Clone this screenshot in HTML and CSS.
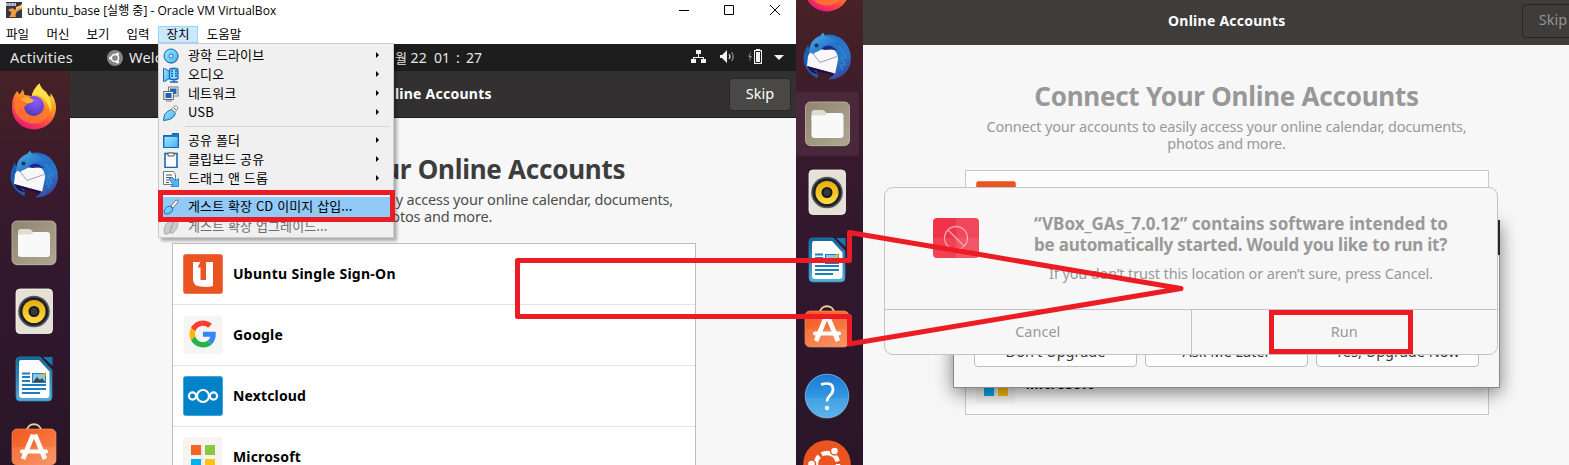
FILE: index.html
```html
<!DOCTYPE html>
<html lang="ko">
<head>
<meta charset="utf-8">
<title>ubuntu_base - Oracle VM VirtualBox</title>
<link rel="stylesheet" href="styles.css">
</head>
<body>
<svg class="defs" width="0" height="0">
  <defs>
    <linearGradient id="ffBody" x1="0.8" y1="0" x2="0.3" y2="1"><stop offset="0" stop-color="#fff04a"/><stop offset=".38" stop-color="#ff9d1f"/><stop offset=".7" stop-color="#ff4a45"/><stop offset="1" stop-color="#e8137c"/></linearGradient>
    <radialGradient id="ffGlobe" cx=".6" cy=".25" r=".8"><stop offset="0" stop-color="#9059ff"/><stop offset="1" stop-color="#4c3bb5"/></radialGradient>
    <linearGradient id="tbBody" x1=".3" y1="0" x2=".8" y2="1"><stop offset="0" stop-color="#1f6fd0"/><stop offset=".6" stop-color="#2a77c4"/><stop offset="1" stop-color="#3b3f9f"/></linearGradient>
    <linearGradient id="tbHead" x1="0" y1="0" x2="1" y2="1"><stop offset="0" stop-color="#4fb2e8"/><stop offset="1" stop-color="#1459b8"/></linearGradient>
    <linearGradient id="filesBg" x1="0" y1="0" x2="1" y2="1"><stop offset="0" stop-color="#8f856f"/><stop offset="1" stop-color="#b0a793"/></linearGradient>
    <linearGradient id="spk" x1="0" y1="0" x2="0" y2="1"><stop offset="0" stop-color="#e5ad0c"/><stop offset="1" stop-color="#ffdc43"/></linearGradient>
    <linearGradient id="loBg" x1="0" y1="0" x2="0" y2="1"><stop offset="0" stop-color="#0c669c"/><stop offset="1" stop-color="#55aedb"/></linearGradient>
    <linearGradient id="swBg" x1="0" y1="0" x2="1" y2="1"><stop offset="0" stop-color="#f4581d"/><stop offset="1" stop-color="#f58b56"/></linearGradient>
    <linearGradient id="helpBg" x1="0" y1="0" x2="0" y2="1"><stop offset="0" stop-color="#1a7bd4"/><stop offset="1" stop-color="#4bb0ea"/></linearGradient>
    <linearGradient id="aqua" x1="0" y1="0" x2="1" y2="1"><stop offset="0" stop-color="#9be6ff"/><stop offset="1" stop-color="#4ab4f0"/></linearGradient>
  </defs>
  <symbol id="firefox" viewBox="0 0 48 48">
    <path d="M7 9 L9.500 12.500 L13 7.500 L14.500 13 Q19 13 21.500 14.500 Q23 7 29.500 1.500 Q31 7 36 10 Q38 14 40.500 15 L40.500 11 Q46 18 46 26 A22 21.500 0 0 1 2 26 Q1.500 16 7 9Z" fill="url(#ffBody)"/>
    <circle cx="24" cy="24" r="10" fill="url(#ffGlobe)"/>
    <path d="M6 16 Q12 14 17 15.500 Q21 16 24 18 Q23 21 18 21.500 Q16 24 14 25 Q14 31 20 33.500 Q25 35.500 30 32 Q35 28 34 22 Q41 30 36 37 Q29 43 19 41 Q6 37 4 25Z" fill="#ff7a2b" opacity=".8"/>
    <path d="M10 17 Q15 14 20 16 Q22 17 24 18 Q22 21 17 21.500 Q14 19 10 17Z" fill="#ffb02e"/>
    <path d="M29.500 1.500 Q31 7 36 10 Q43 20 41 30 Q38 20 32 15 Q26 12 22 14 Q23 7 29.500 1.500Z" fill="#ffe14a"/>
  </symbol>
  <symbol id="thunderbird" viewBox="0 0 48 48">
    <path d="M5 13 Q-1 22 1 31 Q4 41 14 46 L15 44 L12 33 Z" fill="#1b5fb4"/>
    <path d="M14 5 Q28 -1 39 7 Q48 15 48 27 Q47 42 32 47 L25 47.500 L31 43 L28 40 L12 12Z" fill="url(#tbBody)"/>
    <path d="M13 20 Q22 14 31 18 Q35 21 35 28 L32 42 L4 34 L5 24 L8 19 Z" fill="#f8f8fa"/>
    <path d="M8 19 L17 30.500 L34 24.500" fill="none" stroke="#a0a0a8" stroke-width="1"/>
    <path d="M4 34 L32 41.500 L29 43 L10 38 L15 42 Q8 42 4 34Z" fill="#260b45"/>
    <path d="M18 17 Q25 10 34 18 Q29 17 22 18Z" fill="#22268c"/>
    <path d="M6 20 Q7 7 17 4 L20 .5 L22 4 Q32 5 36 13 Q25 9 18 17 L10 22Z" fill="url(#tbHead)"/>
    <circle cx="13.500" cy="13.500" r="2" fill="#17335e"/>
    <path d="M36 14 L43 26 L38 25.500 L42 33 L37 33 L40 38" fill="none" stroke="#2a8bd6" stroke-width="1.200"/>
  </symbol>
  <symbol id="files" viewBox="0 0 48 48">
    <rect x="2" y="2.500" width="44" height="44" rx="5" fill="#5d5447"/>
    <rect x="2" y="2" width="44" height="43.500" rx="5" fill="url(#filesBg)" stroke="#c3bba9" stroke-width=".8"/>
    <path d="M8 13 q0-3 3-3 h8 q2 0 4 3 h14 v8 H8Z" fill="#e0dcd2"/>
    <path d="M8 15.500 h13 l3-2.500 h13 q3 0 3 3 V35 q0 3-3 3 H11 q-3 0-3-3Z" fill="#f9f9f9"/>
  </symbol>
  <symbol id="rhythm" viewBox="0 0 48 48">
    <rect x="6" y="2" width="36.500" height="44.500" rx="4" fill="#e5e1d6" stroke="#fbf9f0" stroke-width=".8"/>
    <circle cx="24" cy="24.500" r="15.800" fill="#555961"/><circle cx="24" cy="24.500" r="14.300" fill="#202128"/>
    <circle cx="24" cy="24.500" r="11.500" fill="url(#spk)"/><circle cx="24" cy="24.500" r="5.500" fill="#18191d"/><circle cx="24" cy="24.500" r="3.500" fill="#37393c"/>
  </symbol>
  <symbol id="writer" viewBox="0 0 48 48">
    <path d="M10 2 H30 L42 15 V42 q0 4-4 4 H10 q-4 0-4-4 V6 q0-4 4-4Z" fill="url(#loBg)" stroke="#2f89bc" stroke-width=".7"/>
    <path d="M33 2 H42.500 V11Z" fill="#1479af"/>
    <path d="M11 5 H29 L39.500 16.500 V40 q0 3-3 3 H12 q-3 0-3-3 V8 q0-3 2-3Z" fill="#fdfdfd"/>
    <path d="M12 18.500 h8 M12 22 h8 M12 26 h8 M12 30 h24 M12 34 h24 M12 38 h18" stroke="#1c7fbe" stroke-width="1.800"/>
    <rect x="22.500" y="18.500" width="13" height="9" fill="#8dc6e5" stroke="#1c7fbe"/><path d="M23 27 l4-5 3 3 2-2 3 4Z" fill="#404448"/><circle cx="34" cy="20" r="1.700" fill="#f5c400"/>
  </symbol>
  <symbol id="software" viewBox="0 0 48 48">
    <path d="M17 9 C17 0 31 0 31 9" fill="none" stroke="#f4cf9b" stroke-width="1.800"/>
    <rect x="2" y="7" width="44" height="36" rx="5" fill="url(#swBg)" stroke="#ff9b6b" stroke-width=".6"/>
    <rect x="2.500" y="25" width="43" height="17.500" rx="3" fill="#fff" opacity=".1"/>
    <path d="M23 13 L13 37 M25 13 L35 37" stroke="#fff" stroke-width="4.600"/><path d="M20.700 13h6.600" stroke="#fff" stroke-width="1"/>
    <path d="M12 29.500 H36" stroke="#fff" stroke-width="4" stroke-linecap="round"/>
  </symbol>
  <symbol id="help" viewBox="0 0 48 48">
    <circle cx="24" cy="24" r="21.800" fill="url(#helpBg)" stroke="#7cbfee" stroke-width=".8"/>
    <path d="M2.500 26 H45.500 A21.500 21.500 0 0 1 2.500 26Z" fill="#fff" opacity=".08"/>
    <path d="M18 12.500 Q30 9 30 17.500 Q30 21 26.500 24 Q24 26.500 24 29.500" fill="none" stroke="#fff" stroke-width="2.700"/><circle cx="24" cy="36" r="2.200" fill="#fff"/>
  </symbol>
  <symbol id="ubuntu" viewBox="0 0 48 48">
    <circle cx="24" cy="24" r="23.800" fill="#e95420"/><circle cx="24" cy="24" r="11" fill="none" stroke="#fff" stroke-width="4.500" stroke-dasharray="20 3"/>
    <g fill="#fff" stroke="#e95420" stroke-width="1.500"><circle cx="8.500" cy="24" r="4"/><circle cx="31.500" cy="11" r="4"/><circle cx="31.500" cy="37" r="4"/></g>
  </symbol>
  <symbol id="msft" viewBox="0 0 40 40">
    <rect width="39" height="39" rx="2" fill="#f5f4f2"/><path d="M8 8h10v10H8z" fill="#f26522"/><path d="M22 8h10v10H22z" fill="#8dc63f"/><path d="M8 22h10v10H8z" fill="#00aeef"/><path d="M22 22h10v10H22z" fill="#ffc20e"/><path d="M19 8v24" stroke="#ddd" />
  </symbol>
</svg>

<main class="stage">
  <section class="left">
    <header class="titlebar">
      <svg class="vbox" viewBox="0 0 16 16"><rect width="16" height="16" fill="#343848"/><path d="M0 1h10v3H0z" fill="#c8cbd4"/><path d="M2 1v4M5 1v3M8 1v3" stroke="#555" stroke-width=".7"/><path d="M2 8q4-3 6-1 2 2 8-3v3q-5 2-6 4t0 4H3q3-3 2-5z" fill="#f79a3a"/><path d="M10 5q3 0 6-3v4q-4 0-6 2z" fill="#ffc77d"/></svg>
      <span class="wintitle">ubuntu_base [실행 중] - Oracle VM VirtualBox</span>
      <svg class="winbtns" viewBox="0 0 120 25"><path d="M9 10.500h10M54.500 5.500h9v9h-9zM100 5l10 10M110 5l-10 10" fill="none" stroke="#000" stroke-width="1"/></svg>
    </header>
    <nav class="menubar"><span>파일</span><span>머신</span><span>보기</span><span>입력</span><span class="open">장치</span><span>도움말</span></nav>
    <div class="topbar">
      <span class="act">Activities</span>
      <svg class="cof" viewBox="0 0 16 16"><circle cx="8" cy="8" r="8" fill="#858585"/><circle cx="8" cy="8" r="3.600" fill="none" stroke="#fff" stroke-width="1.500"/><g fill="#fff"><circle cx="3.500" cy="8" r="1.500"/><circle cx="10.500" cy="4" r="1.500"/><circle cx="10.500" cy="12" r="1.500"/></g></svg>
      <span class="welc">Welc</span>
      <span class="clock">1<b>월</b> 22&nbsp; 01 <i>:</i> 27</span>
      <svg class="tray" viewBox="0 0 100 20"><g fill="#f2f2f2"><rect x="6" y="3" width="5" height="4"/><rect x="1" y="12" width="5" height="4"/><rect x="11" y="12" width="5" height="4"/><path d="M8 7h1v3h5v3h-1v-2H4v2H3v-3h5z"/><path d="M30 8h2l5-5v13l-5-5h-2z"/><path d="M84 8h10l-5 5z"/><path d="M66 2h4v1h2v14h-8V3h2z"/></g><path d="M39 7q2 2.500 0 5" fill="none" stroke="#ddd" stroke-width="1.200"/><path d="M41.500 5q3.500 4.500 0 9" fill="none" stroke="#888" stroke-width="1.200"/><path d="M65.500 4.500h5v11h-5z" fill="none" stroke="#1d1d1d"/><path d="M61 4l-3 6h2l-1 5 3-6h-2z" fill="#888"/></svg>
    </div>
    <div class="desktop">
      <aside class="dock"><svg><use href="#firefox"/></svg><svg><use href="#thunderbird"/></svg><svg><use href="#files"/></svg><svg><use href="#rhythm"/></svg><svg><use href="#writer"/></svg><svg class="low"><use href="#software"/></svg></aside>
      <div class="app">
        <header class="apphead"><span class="headtitle">Online Accounts</span><span class="skip">Skip</span></header>
        <div class="body">
          <h1>Connect Your Online Accounts</h1>
          <p>Connect your accounts to easily access your online calendar, documents,<br>photos and more.</p>
          <ul class="accounts">
            <li><svg viewBox="0 0 40 40"><rect x=".5" y=".5" width="39" height="39" rx="2" fill="#e95420" stroke="#ed7a52"/><path d="M10 8h6l1.500-.5-1.500 4.500h1.500v14h5.500V8h7v24q-6 1.500-12 .5-8-.5-8-7z" fill="#fff"/><path d="M18.500 6.500v7h-4z" fill="#e95420"/></svg><span class="sso">Ubuntu Single Sign-On</span></li>
            <li><svg viewBox="0 0 40 40"><rect x=".5" y=".5" width="38.500" height="38.500" rx="2" fill="#f6f5f4"/><g transform="translate(6.500 5.500) scale(.56)"><path fill="#FF3E30" d="M24 9.500c3.540 0 6.710 1.220 9.210 3.600l6.850-6.850C35.900 2.380 30.470 0 24 0 14.620 0 6.510 5.380 2.560 13.220l7.980 6.190C12.430 13.720 17.740 9.500 24 9.500z"/><path fill="#3686F7" d="M46.980 24.550c0-1.570-.15-3.090-.38-4.550H24v9.020h12.940c-.58 2.960-2.260 5.480-4.780 7.180l7.730 6c4.510-4.180 7.090-10.360 7.090-17.650z"/><path fill="#FFBA00" d="M10.530 28.590c-.48-1.450-.76-2.990-.76-4.590s.27-3.140.76-4.590l-7.980-6.190C.92 16.460 0 20.120 0 24c0 3.880.92 7.540 2.560 10.780l7.970-6.190z"/><path fill="#27B34B" d="M24 48c6.480 0 11.930-2.130 15.890-5.810l-7.730-6c-2.150 1.450-4.920 2.300-8.160 2.300-6.260 0-11.570-4.220-13.470-9.910l-7.980 6.190C6.510 42.620 14.620 48 24 48z"/></g></svg><span>Google</span></li>
            <li><svg viewBox="0 0 40 40"><rect x=".5" y=".5" width="39" height="39" rx="2" fill="#0082c9" stroke="#45a5da"/><g fill="none" stroke="#fff" stroke-width="2.200"><circle cx="20" cy="20" r="6"/><circle cx="9.500" cy="20" r="3.600"/><circle cx="30.500" cy="20" r="3.600"/></g></svg><span>Nextcloud</span></li>
            <li><svg><use href="#msft"/></svg><span>Microsoft</span></li>
          </ul>
        </div>
      </div>
    </div>
    <div class="menu">
      <div class="mi"><svg viewBox="0 0 16 16"><circle cx="8.500" cy="8.500" r="7" fill="#999"/><circle cx="8" cy="8" r="7" fill="url(#aqua)" stroke="#1565b8"/><circle cx="8" cy="8" r="2" fill="#d8f4ff" stroke="#2878b8"/></svg><span>광학 드라이브</span><i></i></div>
      <div class="mi"><svg viewBox="0 0 16 16"><path d="M.5 1.500h1l5 3v7l-5 3h-1z" fill="url(#aqua)" stroke="#1565b8"/><rect x="6.500" y="1.500" width="8.500" height="11" rx="2" fill="#8bdcff" stroke="#1565b8" stroke-width="1.300"/><path d="M8 4h2M12 4h2M8 6.500h2M12 6.500h2M8 9h2M12 9h2M7 15h8M11 13v2" stroke="#1565b8" stroke-width="1.300"/></svg><span>오디오</span><i></i></div>
      <div class="mi"><svg viewBox="0 0 16 16"><rect x="5.500" y="1" width="9.500" height="9" fill="#f5f5f5" stroke="#777"/><rect x="7" y="2.500" width="6.500" height="5.500" fill="#1762bd"/><rect x=".8" y="5.500" width="9.500" height="8" fill="#f5f5f5" stroke="#666"/><rect x="2.500" y="7" width="6" height="5" fill="#1762bd"/><path d="M3 15h6" stroke="#777"/></svg><span>네트워크</span><i></i></div>
      <div class="mi"><svg viewBox="0 0 16 16"><path d="M.5 15.500l1-6q3-4 7-5l4 4q-1 4-6 6z" fill="url(#aqua)" stroke="#1565b8"/><path d="M8.500 4l3-3q2-.5 3.500 1.500 .5 1-3 5z" fill="#f4f4f4" stroke="#888"/><path d="M11 3l2 2" stroke="#555"/></svg><span>USB</span><i></i></div>
      <hr>
      <div class="mi"><svg viewBox="0 0 16 16"><path d="M.5 2.500h8l1-2h6v14H.5z" fill="#2374cf" stroke="#1565b8"/><rect x="1.500" y="4" width="13" height="10" fill="url(#aqua)"/></svg><span>공유 폴더</span><i></i></div>
      <div class="mi"><svg viewBox="0 0 16 16"><rect x="2" y="1.500" width="12" height="14" fill="#f8fcff" stroke="#1e66b5" stroke-width="1.600"/><path d="M5 1h6v3H5z" fill="#fff" stroke="#555"/></svg><span>클립보드 공유</span><i></i></div>
      <div class="mi"><svg viewBox="0 0 16 16"><path d="M.5 .5h10l2 3v10H.5z" fill="#fafafa" stroke="#777"/><path d="M3 4h6M3 6.500h5M3 9h3M3 11.500h3" stroke="#555"/><path d="M6 8l3-2 3.500 3.500 3-2v8H8l2-2z" fill="#54b7ef" stroke="#1565b8" stroke-width=".7"/></svg><span>드래그 앤 드롭</span><i></i></div>
      <div class="mi hot"><svg viewBox="0 0 16 16"><path d="M8 7l5-6q3 0 2 2l-5 6z" fill="#f8f8f8" stroke="#777"/><path d="M1 12q2-5 6-5l3 3q-1 5-7 5-2 0-2-3z" fill="url(#aqua)" stroke="#2470c0"/></svg><span>게스트 확장 CD 이미지 삽입...</span></div>
      <div class="mi off"><svg viewBox="0 0 16 16"><path d="M1 11q1-7 6-9h3l-1 7-4 6H2zM8 8l4-6 3 1-1 6-4 5H7z" fill="#ccc" stroke="#aaa"/></svg><span>게스트 확장 업그레이드...</span></div>
    </div>
  </section>

  <section class="right">
    <aside class="dock rdock"><svg><use href="#firefox"/></svg><svg><use href="#thunderbird"/></svg><svg class="sel"><use href="#files"/></svg><svg><use href="#rhythm"/></svg><svg><use href="#writer"/></svg><svg><use href="#software"/></svg><svg><use href="#help"/></svg><svg><use href="#ubuntu"/></svg></aside>
    <div class="app dim">
      <header class="apphead"><span class="headtitle">Online Accounts</span><span class="skip">Skip</span></header>
      <div class="body">
        <h1>Connect Your Online Accounts</h1>
        <p>Connect your accounts to easily access your online calendar, documents,<br>photos and more.</p>
        <ul class="accounts">
          <li><svg viewBox="0 0 40 40"><rect x=".5" y=".5" width="39" height="39" rx="2" fill="#e95420" stroke="#ed7a52"/></svg></li><li></li><li></li>
          <li><svg><use href="#msft"/></svg><span>Microsoft</span></li>
        </ul>
      </div>
    </div>
    <div class="upgrade"><div class="upbar"></div><div class="upbtns"><span>Don't Upgrade</span><span>Ask Me Later</span><span>Yes, Upgrade Now</span></div></div>
    <div class="dialog">
      <div class="msg">
        <svg class="deny" viewBox="0 0 46 40"><rect width="46" height="40" rx="4" fill="#f03348"/><path d="M23 0h19q4 0 4 4v32q0 4-4 4H23z" fill="#fff" opacity=".1"/><path d="M0 20h46v16q0 4-4 4H4q-4 0-4-4z" fill="#fff" opacity=".08"/><g fill="none" stroke="#f9a7b0" stroke-width="1.300"><circle cx="23" cy="20" r="11.500"/><path d="M15 12l16 16"/></g></svg>
        <div class="copy"><strong><span class="q1">“VBox_GAs_7.0.12” contains software intended to</span><br><span class="q2">be automatically started. Would you like to run it?</span></strong><span class="hint">If you don’t trust this location or aren’t sure, press Cancel.</span></div>
      </div>
      <div class="actions"><span class="cancel">Cancel</span><span class="run">Run</span></div>
    </div>
  </section>

  <svg class="marks" viewBox="0 0 1569 465"><g fill="none" stroke="#ed1c24" stroke-width="5"><path d="M517.500 260.500H849.500V232.500L1181 288.500L849.500 344V316.500H517.500Z" stroke-linejoin="round"/><rect x="160.500" y="192.500" width="232" height="27"/><rect x="1271.500" y="312.500" width="139" height="39"/></g></svg>
</main>
</body>
</html>
```
FILE: styles.css
```css
* { box-sizing: border-box; }
body { margin: 0; font-family: "Noto Sans", "Noto Sans CJK KR", sans-serif; font-size: 14.5px; }
.defs { position: absolute; }
.stage { position: relative; display: flex; width: 1569px; height: 465px; overflow: hidden; }
.left { position: relative; display: flex; flex-direction: column; width: 796px; height: 465px; overflow: hidden; background: #fff; }

.titlebar { display: flex; align-items: flex-start; height: 25px; padding-left: 6px; }
.vbox { width: 16px; height: 16px; margin-top: 2px; }
.wintitle { margin: 1px auto 0 5px; font: 12px/19px "Open Sans", "Noto Sans CJK KR", sans-serif; letter-spacing: 0.02px; white-space: nowrap; }
.winbtns { width: 120px; height: 25px; margin-right: 6px; }
.menubar { display: flex; height: 19px; padding-top: 1px; font: 12.5px/15px "Noto Sans CJK KR", sans-serif; }
.menubar span { width: 40px; text-align: center; }
.menubar span:first-child { width: 38px; padding-right: 3px; }
.menubar .open { height: 17px; background: #cce8ff; outline: 1px solid #99d1ff; outline-offset: -1px; }
.menubar span:last-child { width: 52px; }

.topbar { display: flex; align-items: center; height: 27px; flex: none; padding-left: 10px; background: #1d1d1d; color: #e6e6e6; }
.act { width: 97px; letter-spacing: 0.25px; margin-top: -1px; }
.cof { width: 16px; height: 16px; margin-right: 6px; }
.welc { width: 258px; letter-spacing: 0.2px; margin-top: -1px; }
.clock { white-space: nowrap; font-size: 14px; }
.clock b { font-weight: 400; font-size: 13px; }
.clock i { font-style: normal; margin: 0 2.5px; }
.tray { width: 100px; height: 20px; margin: -1px 6px 0 auto; }

.desktop { display: flex; flex: 1; min-height: 0; }
.dock { display: flex; flex-direction: column; align-items: center; gap: 20.3px; width: 70px; flex: none; padding: 11px 2px 0 0; overflow: hidden;
  background: linear-gradient(#472226 0, #3a1a2c 28%, #30182e 55%, #2a1528 100%); }
.dock svg { width: 48px; height: 48px; flex: none; }
.dock .low { margin-top: -1px; }
.app { flex: 1; min-width: 0; background: #f7f7f7; }
.apphead { display: grid; grid-template-columns: 1fr auto 1fr; align-items: center; height: 47px; background: #333031; border-bottom: 1px solid #1f1a1f; color: #fff; }
.headtitle { grid-column: 2; margin-bottom: 2px; font-weight: 700; font-size: 14px; letter-spacing: 0.25px; }
.skip { justify-self: end; width: 62px; height: 33px; margin-right: 5px; border: 1px solid #2a2728; border-radius: 4px; background: #494846; text-align: center; line-height: 29px; }
.body { display: flex; flex-direction: column; align-items: center; padding-top: 33px; }
h1 { margin: 0; font-size: 26px; line-height: 36px; letter-spacing: -0.25px; color: #3d3d3d; white-space: nowrap; }
p { margin: 4px 0 18px; line-height: 17px; letter-spacing: -0.18px; text-align: center; color: #4d4d4d; white-space: nowrap; }
.accounts { width: 524px; margin: 0; padding: 0; list-style: none; border: 1px solid #bdbdbd; background: #fff; }
.left .accounts { margin-left: 2px; }
.accounts li { display: flex; align-items: center; gap: 10px; height: 61px; padding-left: 10px; border-bottom: 1px solid #e2e2e2; font-weight: 700; font-size: 14px; letter-spacing: 0.15px; color: #000; }
.accounts li span { margin-bottom: 2px; }
.accounts .sso { letter-spacing: 0.28px; }
.accounts svg { width: 40px; height: 40px; }

.menu { position: absolute; left: 158px; top: 43px; width: 236px; height: 195px; padding: 2px 2px; border: 1px solid #ccc; background: #f0f0f0; box-shadow: 3px 3px 3px rgba(0,0,0,.3); }
.mi { display: flex; align-items: center; gap: 9px; height: 19px; padding: 0 12px 0 2px; font: 13px/17px "Noto Sans CJK KR", sans-serif; letter-spacing: 0.12px; color: #000; white-space: nowrap; }
.mi span { margin-bottom: 2px; }
.mi svg { width: 16px; height: 16px; }
.mi i { width: 0; height: 0; margin-left: auto; margin-bottom: 2px; border: 3px solid transparent; border-left: 3px solid #000; border-right: 0; }
.menu hr { height: 1px; margin: 4px 1px 4px 24px; border: 0; background: #d5d5d5; }
.mi.hot { margin-top: 9px; height: 20px; background: #91c9f7; }
.mi.hot span { margin-bottom: 4px; }
.mi.off { color: #6d6d6d; }

.right { position: relative; display: flex; width: 773px; height: 465px; overflow: hidden; }
.rdock { gap: 20px; width: 67px; height: 465px; padding: 0 5px 0 0; }
.rdock svg:first-child { margin-top: -36px; }
.rdock .sel { width: 63px; height: 64px; margin: -8px 0; padding: 8px 0; border-radius: 4px; background: #48283a; }
.dim .apphead { height: 45px; border: 0; background: #3e3d3b; grid-template-columns: 305px auto 1fr; }
.dim .headtitle { margin-bottom: 4px; }
.dim .skip { height: 34px; margin: 0 -15px 4px 0; background: none; color: #929292; border-color: #272625; }
.dim .body { padding: 33px 0 0 21px; }
.dim h1 { color: #989898; }
.dim p { color: #999; }
.dim .accounts { background: #fcfcfc; border-color: #c8c8c8; }
.dim li:last-child { height: 60px; border: 0; }
.upgrade { position: absolute; left: 157px; top: 220px; width: 547px; height: 168px; display: flex; flex-direction: column; justify-content: space-between; background: #f7f7f7; border: 1px solid #888; border-top: 0; box-shadow: 0 5px 17px rgba(0,0,0,.5); }
.upbar { height: 35px; margin-right: -1px; background: #272727; }
.upbtns { display: flex; gap: 8px; padding: 0 20px 20px 20px; }
.upbtns span { flex: 1; height: 35px; border: 1px solid #bdbdbd; border-radius: 4px; background: #fdfdfd; text-align: center; line-height: 36px; font-size: 14.5px; color: #333; }
.dialog { position: absolute; left: 88px; top: 187px; width: 614px; height: 168px; display: flex; flex-direction: column; border: 1px solid #c4c4c4; border-radius: 9px; background: #f7f7f7; color: #999; }
.msg { flex: 1; display: flex; padding: 25px 0 0 48px; }
.deny { width: 46px; height: 40px; margin-top: 5px; }
.copy { display: flex; flex-direction: column; align-items: center; width: 416px; margin-left: 54px; white-space: nowrap; }
.copy strong { font-size: 17px; line-height: 21px; text-align: left; }
.q1 { letter-spacing: 0.02px; }
.q2 { letter-spacing: -0.22px; }
.hint { margin-top: 10px; line-height: 17px; letter-spacing: -0.12px; }
.actions { display: flex; height: 45px; border-top: 1px solid #c4c4c4; }
.actions span { flex: 1; text-align: center; line-height: 42px; }
.actions .run { border-left: 1px solid #c4c4c4; }
.marks { position: absolute; inset: 0; width: 1569px; height: 465px; }
```
